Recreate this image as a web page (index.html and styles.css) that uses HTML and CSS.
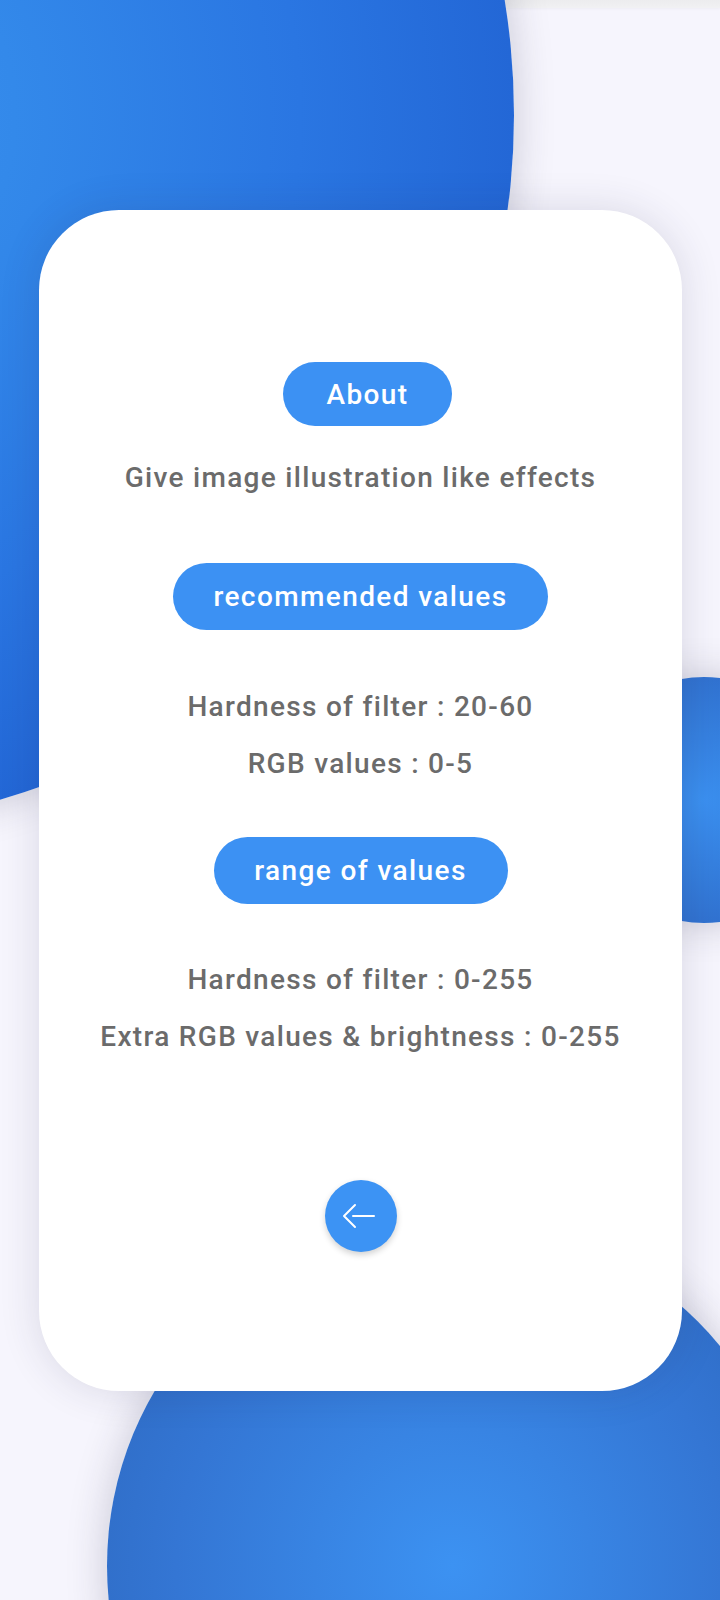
FILE: index.html
```html
<!DOCTYPE html>
<html lang="en">
<head>
<meta charset="utf-8">
<title>About</title>
<link rel="stylesheet" href="styles.css">
</head>
<body>
<div class="screen">
  <div class="topbar"></div>
  <div class="blob blob--top"></div>
  <div class="blob blob--right"></div>
  <div class="blob blob--bottom"></div>
  <main class="card">
    <div class="pill pill--about">About</div>
    <p class="line line--intro">Give image illustration like effects</p>
    <div class="pill pill--rec">recommended values</div>
    <div class="lines lines--first">
      <p class="line">Hardness of filter : 20-60</p>
      <p class="line">RGB values : 0-5</p>
    </div>
    <div class="pill pill--range">range of values</div>
    <div class="lines lines--second">
      <p class="line">Hardness of filter : 0-255</p>
      <p class="line">Extra RGB values &amp; brightness : 0-255</p>
    </div>
    <button class="back" aria-label="Back">
      <svg width="72" height="72" viewBox="0 0 72 72" fill="none" stroke="#fff" stroke-width="2" stroke-linecap="round" stroke-linejoin="round">
        <polyline points="30,25 19,36 30,47"/>
        <line x1="28" y1="36" x2="49" y2="36"/>
      </svg>
    </button>
  </main>
</div>
</body>
</html>
```
FILE: styles.css
```css
* { box-sizing: border-box; }
html, body { margin: 0; padding: 0; }
body {
  background: #f6f5fd;
  font-family: Roboto, "Noto Sans", sans-serif;
}
.screen {
  position: relative;
  width: 720px;
  height: 1600px;
  overflow: hidden;
  background: #f6f5fd;
  padding-top: 210px;
}
.topbar {
  position: absolute;
  left: 0; top: 0;
  width: 720px;
  height: 8px;
  background: linear-gradient(#ececee, #f1f1f3);
  box-shadow: 0 1px 3px rgba(0,0,0,0.04);
}
.blob {
  position: absolute;
  border-radius: 50%;
  box-shadow: 0 0 40px rgba(40, 40, 70, 0.22);
}
.blob--top {
  left: -912px;
  top: -598px;
  width: 1426px;
  height: 1426px;
  background: radial-gradient(circle closest-side, #3b92f2 0%, #3389ea 30%, #2a76e2 70%, #2367d6 100%);
}
.blob--right {
  left: 581px;
  top: 677px;
  width: 246px;
  height: 246px;
  background: radial-gradient(circle closest-side, #3b90f0 0%, #3172d0 100%);
}
.blob--bottom {
  left: 107px;
  top: 1220px;
  width: 692px;
  height: 692px;
  background: radial-gradient(circle closest-side, #3c92f2 0%, #3476d4 80%, #3170cb 100%);
}
.card {
  position: relative;
  margin-left: 39px;
  width: 643px;
  height: 1181px;
  background: #fff;
  border-radius: 80px;
  box-shadow: 0 0 40px rgba(40, 40, 80, 0.14);
  display: flex;
  flex-direction: column;
  align-items: center;
  padding-top: 152px;
}
.pill {
  background: #3c91f3;
  color: #fff;
  font-size: 28px;
  font-weight: 500;
  letter-spacing: 1.4px;
  display: flex;
  align-items: center;
  justify-content: center;
  border-radius: 34px;
}
.pill--about { width: 169px; height: 64px; margin-left: 14px; }
.pill--rec { width: 375px; height: 67px; margin-top: 57px; }
.pill--range { width: 294px; height: 67px; margin-top: 45px; }
.line {
  margin: 0;
  color: #6b6b6b;
  font-size: 28px;
  font-weight: 500;
  letter-spacing: 1.3px;
  line-height: 57px;
  text-align: center;
  white-space: nowrap;
}
.line--intro { margin-top: 23px; }
.lines { display: flex; flex-direction: column; align-items: center; }
.lines--first { margin-top: 48px; }
.lines--second { margin-top: 47px; }
.back {
  margin-top: 115px;
  width: 72px;
  height: 72px;
  padding: 0;
  border: none;
  border-radius: 50%;
  background: #3c93f4;
  box-shadow: 0 3px 6px rgba(0,0,0,0.18);
  display: flex;
  align-items: center;
  justify-content: center;
}
.back svg { display: block; }
```
